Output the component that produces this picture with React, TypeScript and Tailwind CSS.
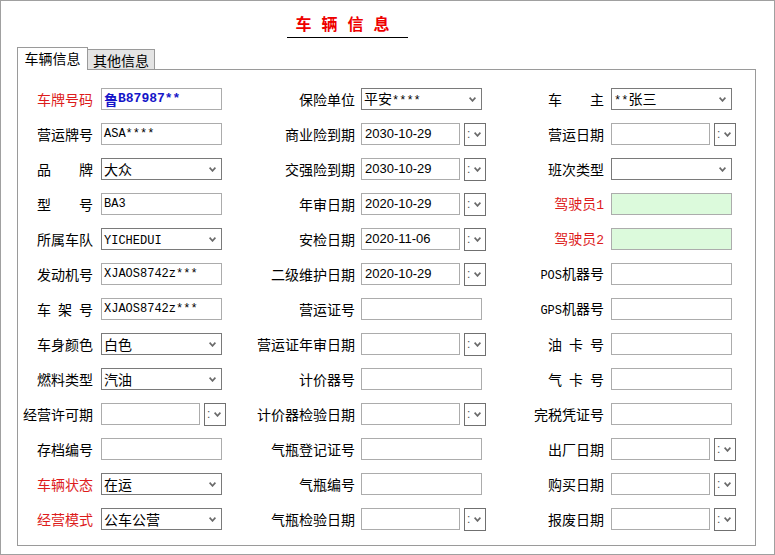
import React from "react";

type Kind = "text" | "select" | "date" | "green" | "blue";
type Cell = { label: string; red?: boolean; just?: boolean; kind: Kind; value?: string };

const rows: Cell[][] = [
  [
    { label: "车牌号码", red: true, kind: "blue", value: "鲁B87987**" },
    { label: "保险单位", kind: "select", value: "平安****" },
    { label: "车主", just: true, kind: "select", value: "**张三" },
  ],
  [
    { label: "营运牌号", kind: "text", value: "ASA****" },
    { label: "商业险到期", kind: "date", value: "2030-10-29" },
    { label: "营运日期", kind: "date" },
  ],
  [
    { label: "品牌", just: true, kind: "select", value: "大众" },
    { label: "交强险到期", kind: "date", value: "2030-10-29" },
    { label: "班次类型", kind: "select" },
  ],
  [
    { label: "型号", just: true, kind: "text", value: "BA3" },
    { label: "年审日期", kind: "date", value: "2020-10-29" },
    { label: "驾驶员1", red: true, kind: "green" },
  ],
  [
    { label: "所属车队", kind: "select", value: "YICHEDUI" },
    { label: "安检日期", kind: "date", value: "2020-11-06" },
    { label: "驾驶员2", red: true, kind: "green" },
  ],
  [
    { label: "发动机号", kind: "text", value: "XJAOS8742z***" },
    { label: "二级维护日期", kind: "date", value: "2020-10-29" },
    { label: "POS机器号", kind: "text" },
  ],
  [
    { label: "车架号", just: true, kind: "text", value: "XJAOS8742z***" },
    { label: "营运证号", kind: "text" },
    { label: "GPS机器号", kind: "text" },
  ],
  [
    { label: "车身颜色", kind: "select", value: "白色" },
    { label: "营运证年审日期", kind: "date" },
    { label: "油卡号", just: true, kind: "text" },
  ],
  [
    { label: "燃料类型", kind: "select", value: "汽油" },
    { label: "计价器号", kind: "text" },
    { label: "气卡号", just: true, kind: "text" },
  ],
  [
    { label: "经营许可期", kind: "date" },
    { label: "计价器检验日期", kind: "date" },
    { label: "完税凭证号", kind: "text" },
  ],
  [
    { label: "存档编号", kind: "text" },
    { label: "气瓶登记证号", kind: "text" },
    { label: "出厂日期", kind: "date" },
  ],
  [
    { label: "车辆状态", red: true, kind: "select", value: "在运" },
    { label: "气瓶编号", kind: "text" },
    { label: "购买日期", kind: "date" },
  ],
  [
    { label: "经营模式", red: true, kind: "select", value: "公车公营" },
    { label: "气瓶检验日期", kind: "date" },
    { label: "报废日期", kind: "date" },
  ],
];

function Mixed({ s, bold }: { s: string; bold?: boolean }) {
  const parts = s.match(/[\x00-\x7f]+|[^\x00-\x7f]+/g) || [];
  return (
    <>
      {parts.map((p, i) =>
        /^[\x00-\x7f]/.test(p) ? (
          <span
            key={i}
            className={
              bold
                ? "font-['Liberation_Mono',monospace] text-[13px] font-bold"
                : "font-['Liberation_Mono',monospace] text-[12px]"
            }
          >
            {p}
          </span>
        ) : (
          <span key={i} className={bold ? "font-['Noto_Sans_CJK_SC',sans-serif] text-[14px] font-bold" : "font-['Noto_Sans_CJK_SC',sans-serif] text-[14px]"}>
            {p}
          </span>
        )
      )}
    </>
  );
}

function Chevron() {
  return (
    <svg width="7" height="5" viewBox="0 0 7 5" className="shrink-0">
      <path d="M0.6 0.6 L3.5 3.9 L6.4 0.6" stroke="#6a6a6a" strokeWidth="1.6" fill="none" />
    </svg>
  );
}

function Label({ c }: { c: Cell }) {
  const color = c.red ? "text-[#dd1c1c]" : "text-black";
  if (c.just) {
    const chars = Array.from(c.label);
    return (
      <div className={`flex w-[56px] justify-between ${color}`}>
        {chars.map((ch, i) => (
          <span key={i}>{ch}</span>
        ))}
      </div>
    );
  }
  const m = c.label.match(/^([A-Z]+)(.*)$/);
  if (m) {
    return (
      <div className={color}>
        <span className="font-['Liberation_Mono',monospace] text-[12px]">{m[1]}</span>
        {m[2]}
      </div>
    );
  }
  const m2 = c.label.match(/^(.*?)(\d)$/);
  if (m2) {
    return (
      <div className={color}>
        {m2[1]}
        <span className="font-['Liberation_Mono',monospace] text-[13px]">{m2[2]}</span>
      </div>
    );
  }
  return <div className={color}>{c.label}</div>;
}

function Field({ c }: { c: Cell }) {
  if (c.kind === "select") {
    return (
      <div className="flex h-[22px] w-[121px] items-center justify-between overflow-hidden border border-[#7a7a7a] bg-white pl-[2px] pr-[5px] leading-[20px] text-black">
        <div className="whitespace-nowrap">{c.value ? <Mixed s={c.value} /> : null}</div>
        <Chevron />
      </div>
    );
  }
  if (c.kind === "date") {
    return (
      <div className="flex items-center gap-[4px]">
        <div className="flex h-[22px] w-[99px] items-center overflow-hidden whitespace-nowrap border border-[#acacac] bg-white pl-[3px] font-['Liberation_Sans',sans-serif] text-[13px] leading-[20px] text-black">
          {c.value}
        </div>
        <div className="flex h-[23px] w-[22px] items-center border border-[#707070] bg-white pl-[2px] text-[#555]">
          <span className="font-['Liberation_Sans',sans-serif] text-[12px] leading-none">:</span>
          <span className="ml-[4px] flex">
            <Chevron />
          </span>
        </div>
      </div>
    );
  }
  if (c.kind === "green") {
    return <div className="h-[22px] w-[121px] border border-[#acacac] bg-[#dcfadc]" />;
  }
  if (c.kind === "blue") {
    return (
      <div className="flex h-[22px] w-[121px] items-center overflow-hidden whitespace-nowrap border border-[#acacac] bg-white pl-[2px] leading-[20px] text-[#1515c8]">
        <Mixed s={c.value || ""} bold />
      </div>
    );
  }
  return (
    <div className="flex h-[22px] w-[121px] items-center overflow-hidden whitespace-nowrap border border-[#acacac] bg-white pl-[2px] leading-[20px] text-black">
      {c.value ? <Mixed s={c.value} /> : null}
    </div>
  );
}

const labelPad = ["pr-[8px]", "pr-[6px]", "pr-[7px]"];

export default function App() {
  return (
    <div className="h-[555px] w-[775px] border border-[#a0a0a0] bg-white font-['Noto_Sans_CJK_SC',sans-serif] text-[14px]">
      <div className="ml-[286px] w-[121px] border-b border-black pb-[4px] pt-[12px] text-center text-[16px] font-bold leading-[20px] tracking-[10px] text-[#ee0000]">
        车辆信息
      </div>
      <div className="ml-[16px] mt-[9px] flex items-end">
        <div className="relative z-10 -mb-px flex h-[23px] w-[71px] items-start justify-center border border-b-0 border-[#9a9a9a] bg-white pt-[1px] leading-[19px] text-black">
          车辆信息
        </div>
        <div className="flex h-[20px] w-[67px] items-center justify-center border border-l-0 border-b-0 border-[#9a9a9a] bg-[#e4e4e4] leading-[18px] text-black">
          其他信息
        </div>
      </div>
      <div className="relative ml-[16px] h-[477px] w-[739px] border border-[#9a9a9a] pt-[18px]">
        <div className="grid grid-cols-[83px_125px_135px_125px_125px_125px] items-center gap-y-[13px]">
          {rows.map((r, ri) =>
            r.map((c, ci) => (
              <React.Fragment key={`${ri}-${ci}`}>
                <div className={`flex h-[22px] items-center justify-end whitespace-nowrap leading-[20px] ${labelPad[ci]}`}>
                  <Label c={c} />
                </div>
                <div className="flex h-[22px] items-center">
                  <Field c={c} />
                </div>
              </React.Fragment>
            ))
          )}
        </div>
      </div>
    </div>
  );
}
